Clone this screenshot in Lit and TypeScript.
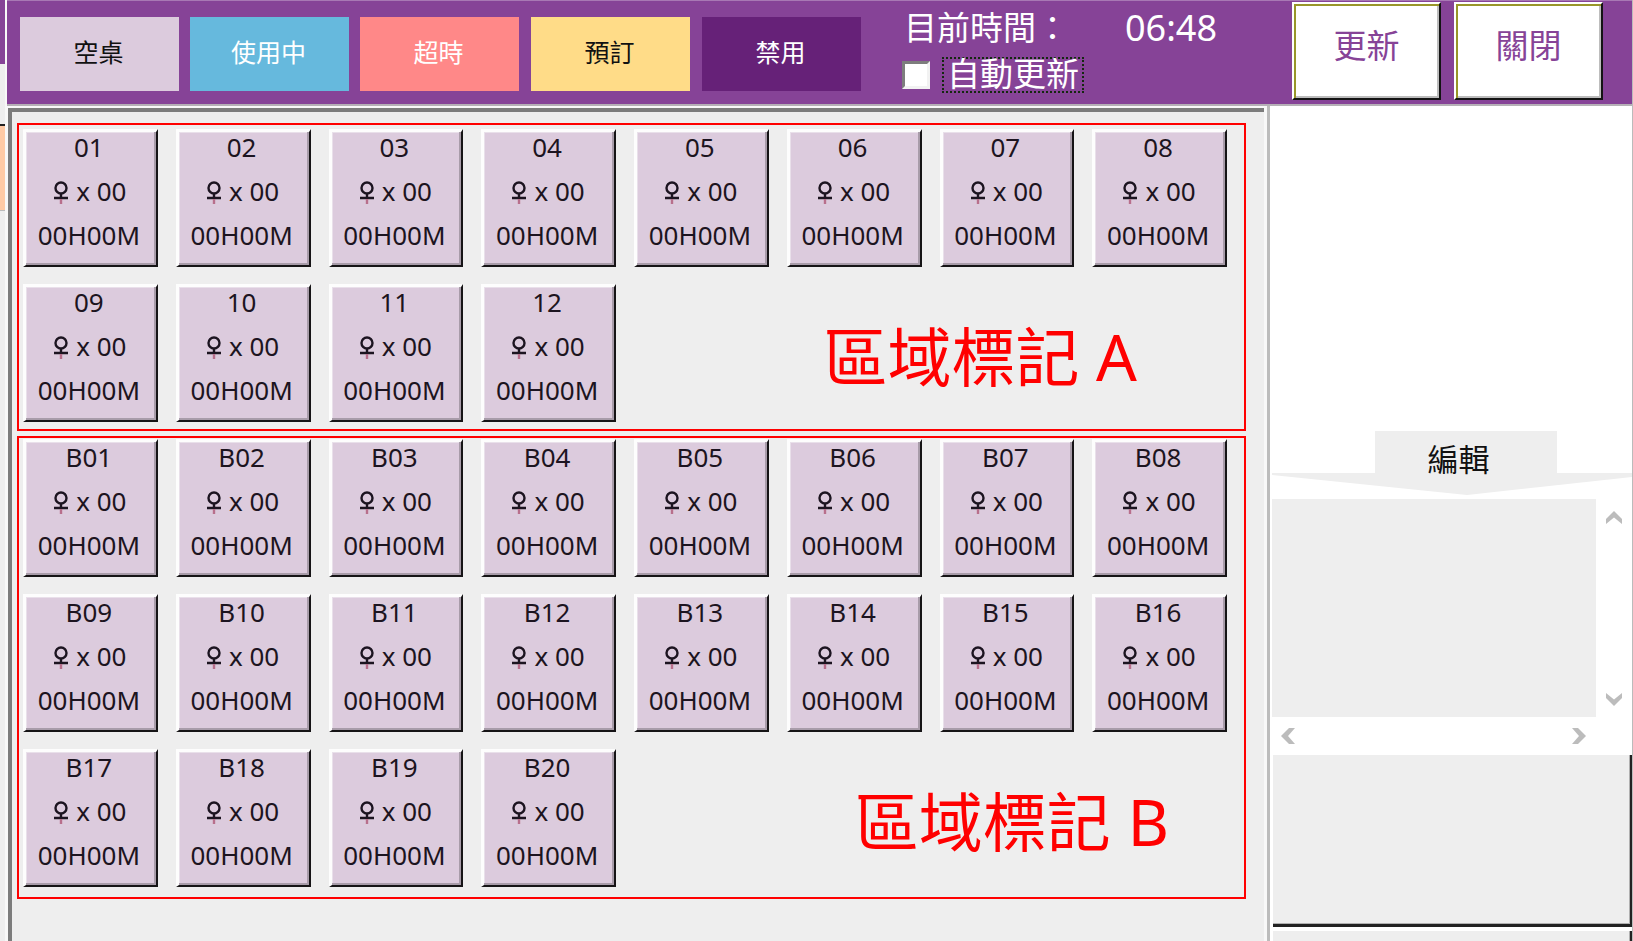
import { LitElement, html, css } from "lit";
import { customElement, property, state } from "lit/decorators.js";
import { classMap } from "lit/directives/class-map.js";

interface Seat {
  id: string;
  guests: string;
  time: string;
}

const makeSeats = (prefix: string, count: number): Seat[] =>
  Array.from({ length: count }, (_, i) => ({
    id: prefix + String(i + 1).padStart(2, "0"),
    guests: "00",
    time: "00H00M",
  }));

@customElement("seat-button")
class SeatButton extends LitElement {
  @property({ attribute: false }) seat!: Seat;

  static styles = css`
    :host {
      display: block;
    }
    .seat {
      display: flex;
      flex-direction: column;
      align-items: center;
      box-sizing: border-box;
      width: 100%;
      height: 138px;
      margin: 0;
      padding: 0 4px 0 0;
      border: 0;
      border-top: 3px solid #fdfdfd;
      border-left: 3px solid #fdfdfd;
      border-right: 2px solid #161416;
      border-bottom: 2px solid #161416;
      box-shadow: inset -2px -2px 0 #a89ca9, inset 1px 1px 0 #e9e0ea;
      background: #dccbdd;
      color: #1c1420;
      font: 26px/44px "Noto Sans", "Noto Sans CJK TC", sans-serif;
      white-space: nowrap;
      overflow: hidden;
    }
    .line {
      display: flex;
      align-items: center;
      height: 44px;
    }
    .first {
      height: 30px;
      margin-bottom: 7px;
    }
    .guests {
      gap: 8px;
      padding-left: 3px;
    }
    .female {
      width: 14px;
      height: 24px;
      margin-top: 4px;
    }
  `;

  render() {
    return html`<button class="seat" type="button">
      <span class="line first">${this.seat.id}</span>
      <span class="line guests">
        <svg class="female" viewBox="0 0 14 24" role="img" aria-label="♀" fill="none" stroke="#1c1420" stroke-width="2.400">
          <circle cx="7" cy="7" r="5.500" />
          <path d="M0 17H14M7 12.500V17" />
          <path d="M7 18V23" stroke="#b86f8c" />
        </svg>
        <span>x ${this.seat.guests}</span>
      </span>
      <span class="line">${this.seat.time}</span>
    </button>`;
  }
}

@customElement("seat-area")
class SeatArea extends LitElement {
  @property() name = "";
  @property({ type: Number }) count = 0;

  static styles = css`
    :host {
      display: block;
    }
    .area {
      display: grid;
      grid-template-columns: repeat(8, minmax(0, 1fr));
      gap: 17px 18px;
      padding: 4px 17px 7px 4px;
      border: 2px solid #ff0000;
    }
    .area.b {
      padding-top: 1px;
      padding-bottom: 10px;
    }
    .label {
      grid-column: 5 / -1;
      display: flex;
      align-items: center;
      justify-content: flex-end;
      padding: 8px 90px 0 0;
      color: #ff0000;
      font: 400 64px/72px "Noto Sans", "Noto Sans CJK TC", sans-serif;
      white-space: nowrap;
    }
    .b .label {
      padding-right: 58px;
    }
  `;

  render() {
    const prefix = this.name === "A" ? "" : this.name;
    return html`<section class=${classMap({ area: true, b: this.name === "B" })}>
      ${makeSeats(prefix, this.count).map((s) => html`<seat-button .seat=${s}></seat-button>`)}
      <div class="label">區域標記 ${this.name}</div>
    </section>`;
  }
}

@customElement("app-root")
class AppRoot extends LitElement {
  @state() private autoRefresh = false;

  static styles = css`
    :host {
      display: block;
      font-family: "Noto Sans", "Noto Sans CJK TC", sans-serif;
    }
    .page {
      display: grid;
      grid-template-columns: 5px minmax(0, 1fr);
      gap: 2px;
      height: 100vh;
      overflow: hidden;
      background: #f8f8f8;
    }
    .behind {
      display: grid;
      grid-template-rows: 64px 60px 87px 1fr;
      background: #eeeeee;
    }
    .behind-head {
      background: #864397;
    }
    .behind-item {
      grid-row: 3;
      background: #ffcaa5;
      border-top: 2px solid #222222;
      border-bottom: 1px solid #bbbbbb;
    }
    .window {
      display: flex;
      flex-direction: column;
      border-right: 1px solid #bbbbbb;
      min-height: 0;
    }
    .header {
      display: flex;
      height: 103px;
      flex: none;
      padding: 0 29px 0 13px;
      border-top: 1px solid #a878b4;
      border-bottom: 2px solid #b5b0b6;
      background: #864397;
    }
    .legend {
      display: flex;
      gap: 12px;
      padding-top: 16px;
    }
    .legend-group {
      display: flex;
      gap: 11px;
    }
    .legend-group.wide {
      gap: 12px;
    }
    .chip {
      width: 159px;
      height: 74px;
      padding: 0 2px 5px 0;
      box-sizing: border-box;
      border: 0;
      font: 25px/32px "Noto Sans", "Noto Sans CJK TC", sans-serif;
      color: #ffffff;
    }
    .empty {
      background: #dccbdd;
      color: #111111;
    }
    .busy {
      background: #66b9dd;
    }
    .late {
      background: #ff8888;
    }
    .booked {
      background: #ffdc88;
      color: #111111;
    }
    .disabled {
      background: #662178;
    }
    .status {
      display: flex;
      flex-direction: column;
      margin-left: 41px;
      color: #ffffff;
      font-size: 33px;
      line-height: 36px;
    }
    .clock {
      display: flex;
      align-items: center;
      gap: 56px;
      box-sizing: border-box;
      height: 56px;
      padding: 0 0 3px 2px;
      white-space: nowrap;
    }
    .time {
      font-size: 36px;
    }
    .auto {
      display: flex;
      align-items: center;
      gap: 12px;
    }
    .check {
      appearance: none;
      width: 28px;
      height: 28px;
      margin: 0;
      border: 3px solid;
      border-color: #7d7d7d #f2f2f2 #f2f2f2 #7d7d7d;
      background: #ffffff;
    }
    .check:checked {
      background: #864397;
    }
    .auto-label {
      box-sizing: border-box;
      height: 36px;
      padding: 0 3px;
      border: 2px dotted #14280f;
      line-height: 30px;
      white-space: nowrap;
    }
    .actions {
      display: flex;
      gap: 13px;
      margin-left: auto;
      padding-top: 1px;
    }
    .action {
      width: 149px;
      height: 98px;
      padding: 0 0 10px 0;
      border: 2px solid;
      border-color: #ffffff #141414 #141414 #ffffff;
      box-shadow: inset 2px 2px 0 #99962a, inset -2px -2px 0 #bdbdbd;
      background: #ffffff;
      color: #864397;
      font: 33px/40px "Noto Sans", "Noto Sans CJK TC", sans-serif;
    }
    .body {
      display: grid;
      grid-template-columns: minmax(0, 1fr) 362px;
      flex: 1;
      min-height: 0;
    }
    .floor-wrap {
      padding: 2px 3px 0 1px;
      border-right: 3px solid #bcbcbc;
      min-height: 0;
    }
    .floor {
      display: flex;
      flex-direction: column;
      gap: 5px;
      box-sizing: border-box;
      height: 100%;
      padding: 11px 18px 0 5px;
      border-top: 4px solid #7c7c7c;
      border-left: 4px solid #7c7c7c;
      background: #eeeeee;
    }
    .side {
      display: flex;
      flex-direction: column;
      padding-left: 2px;
      background: #ffffff;
      min-height: 0;
    }
    .blank {
      flex: none;
      height: 325px;
    }
    .tab {
      display: grid;
      flex: none;
      height: 68px;
    }
    .tab-shape {
      grid-area: 1 / 1;
      width: 100%;
      height: 64px;
    }
    .tab-button {
      grid-area: 1 / 1;
      justify-self: center;
      align-self: start;
      width: 182px;
      height: 56px;
      margin-left: 27px;
      padding: 0 14px 0 0;
      border: 0;
      background: none;
      color: #111111;
      font: 31px/40px "Noto Sans", "Noto Sans CJK TC", sans-serif;
    }
    .list {
      display: grid;
      grid-template: 218px 38px / minmax(0, 1fr) 36px;
      flex: none;
    }
    .list-content {
      background: #eeeeee;
    }
    .bar {
      display: flex;
      justify-content: space-between;
      align-items: center;
    }
    .bar.vertical {
      flex-direction: column;
    }
    .arrow {
      display: grid;
      place-items: center;
      width: 32px;
      height: 36px;
      padding: 0;
      border: 0;
      background: none;
    }
    .panels {
      display: flex;
      flex-direction: column;
      gap: 4px;
      padding-left: 1px;
      min-height: 0;
    }
    .panel {
      box-sizing: border-box;
      flex: none;
      height: 172px;
      border-right: 2px solid #222222;
      border-bottom: 3px solid #222222;
      box-shadow: inset -1px -1px 0 #b0b0b0;
      background: #eeeeee;
    }
  `;

  private arrow(label: string, d: string) {
    return html`<button class="arrow" type="button" aria-label=${label}>
      <svg width="16" height="16" viewBox="0 0 16 16"><path d=${d} fill="#bcbcbc" /></svg>
    </button>`;
  }

  render() {
    return html`<div class="page">
      <div class="behind">
        <div class="behind-head"></div>
        <div class="behind-item"></div>
      </div>
      <div class="window">
        <header class="header">
          <div class="legend">
            <div class="legend-group">
              <button class="chip empty" type="button">空桌</button>
              <button class="chip busy" type="button">使用中</button>
              <button class="chip late" type="button">超時</button>
            </div>
            <div class="legend-group wide">
              <button class="chip booked" type="button">預訂</button>
              <button class="chip disabled" type="button">禁用</button>
            </div>
          </div>
          <div class="status">
            <div class="clock"><span>目前時間：</span><span class="time">06:48</span></div>
            <div class="auto">
              <input
                class="check"
                id="auto"
                type="checkbox"
                .checked=${this.autoRefresh}
                @change=${(e: Event) => (this.autoRefresh = (e.target as HTMLInputElement).checked)}
              />
              <label class="auto-label" for="auto">自動更新</label>
            </div>
          </div>
          <div class="actions">
            <button class="action" type="button">更新</button>
            <button class="action" type="button">關閉</button>
          </div>
        </header>
        <div class="body">
          <main class="floor-wrap">
            <div class="floor">
              <seat-area name="A" count="12"></seat-area>
              <seat-area name="B" count="20"></seat-area>
            </div>
          </main>
          <aside class="side">
            <div class="blank"></div>
            <div class="tab">
              <svg class="tab-shape" viewBox="0 0 360 64" preserveAspectRatio="none">
                <path d="M103 0H285V42H360V46L195 64L0 44V42H103Z" fill="#eeeeee" />
              </svg>
              <button class="tab-button" type="button">編輯</button>
            </div>
            <div class="list">
              <div class="list-content"></div>
              <div class="bar vertical">
                ${this.arrow("向上", "M8 2L16 10V15L8 8.500L0 15V10Z")}
                ${this.arrow("向下", "M8 15L16 7V2L8 8.500L0 2V7Z")}
              </div>
              <div class="bar">
                ${this.arrow("向左", "M1 8L9 0H15L8 8L15 16H9Z")}
                ${this.arrow("向右", "M14 8L6 0H0L7 8L0 16H6Z")}
              </div>
            </div>
            <div class="panels">
              <div class="panel"></div>
              <div class="panel"></div>
            </div>
          </aside>
        </div>
      </div>
    </div>`;
  }
}
